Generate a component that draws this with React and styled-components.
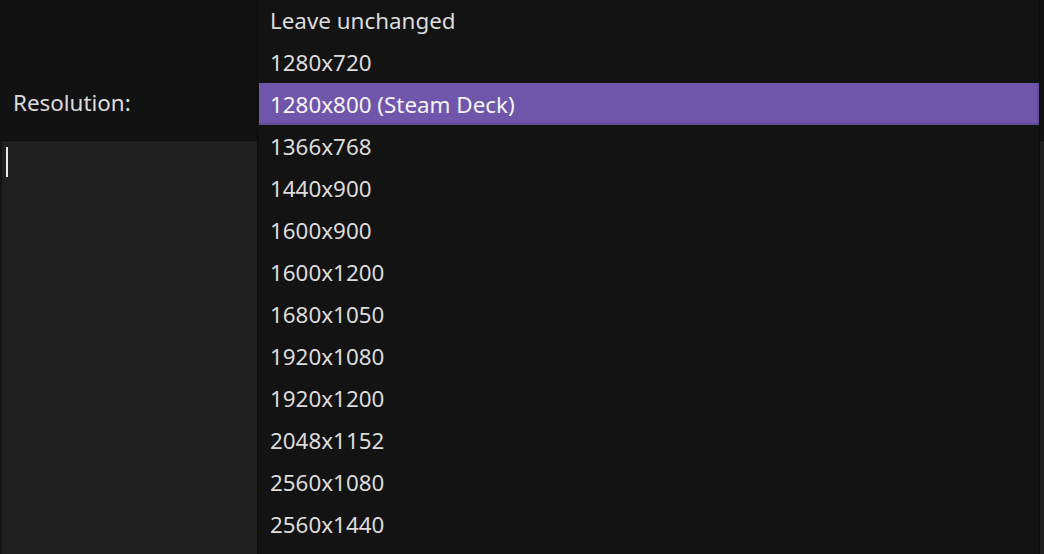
import React from "react";
import styled, { createGlobalStyle } from "styled-components";

const Global = createGlobalStyle`
  html, body { margin: 0; padding: 0; background: #121212; }
  body { font-family: "Noto Sans", "Open Sans", sans-serif; overflow: hidden; }
`;

const Page = styled.div`
  width: 1044px;
  height: 554px;
  position: relative;
  display: flex;
  flex-direction: column;
  background: #121212;
  overflow: hidden;
`;

const Header = styled.div`
  height: 140px;
  display: flex;
  align-items: center;
  padding: 0 13px;
  padding-top: 67px;
  box-sizing: border-box;
  align-items: flex-start;
`;

const Label = styled.span`
  color: #dcdcdc;
  font-size: 22.4px;
  line-height: 30px;
  padding-top: 21px;
`;

const Content = styled.div`
  flex: 1;
  background: #1f1f1f;
  border-top: 1px solid #0c0c0c;
  border-left: 2px solid #141414;
  padding: 6px 4px;
`;

const Caret = styled.div`
  width: 2px;
  height: 30px;
  background: #e8e8e8;
`;

const Menu = styled.ul`
  position: absolute;
  top: -1px;
  left: 257px;
  right: 4px;
  bottom: 0;
  margin: 0;
  padding: 0 0 0 1px;
  list-style: none;
  background: #131313;
  border-left: 1px solid #0b0b0b;
  border-right: 1px solid #0b0b0b;
`;

const Item = styled.li`
  height: 42px;
  display: flex;
  align-items: center;
  padding-left: 11px;
  font-size: 22.4px;
  color: ${(p) => (p.$selected ? "#f4f4f4" : "#dcdcdc")};
  background: ${(p) => (p.$selected ? "#6f56ab" : "transparent")};
  box-shadow: ${(p) =>
    p.$selected ? "inset -2px -2px 0 #634c9a" : "none"};
  box-sizing: border-box;
`;

const options = [
  "Leave unchanged",
  "1280x720",
  "1280x800 (Steam Deck)",
  "1366x768",
  "1440x900",
  "1600x900",
  "1600x1200",
  "1680x1050",
  "1920x1080",
  "1920x1200",
  "2048x1152",
  "2560x1080",
  "2560x1440",
];

export default function App() {
  return (
    <Page>
      <Global />
      <Header>
        <Label>Resolution:</Label>
      </Header>
      <Content>
        <Caret />
      </Content>
      <Menu>
        {options.map((o, i) => (
          <Item key={o} $selected={i === 2}>
            {o}
          </Item>
        ))}
      </Menu>
    </Page>
  );
}
